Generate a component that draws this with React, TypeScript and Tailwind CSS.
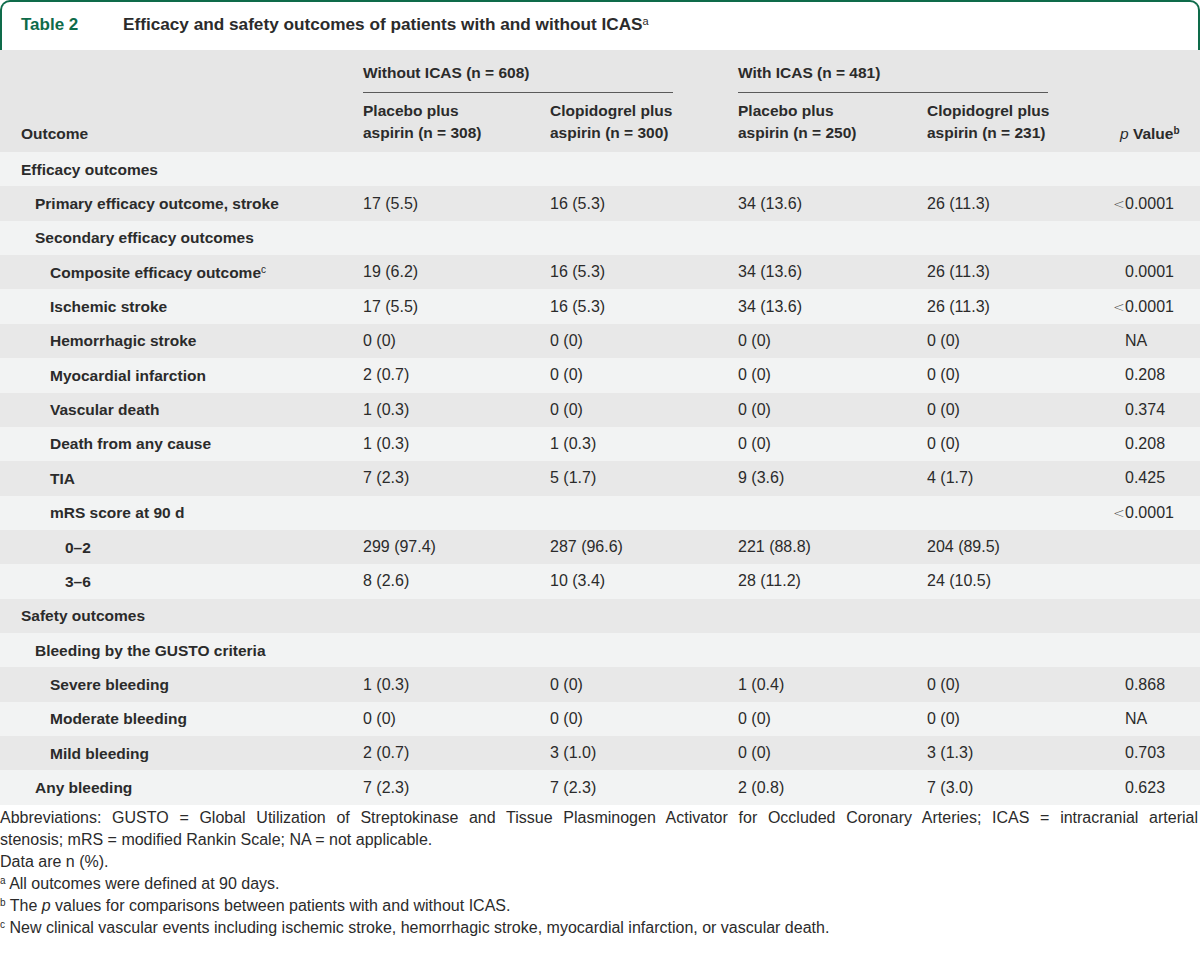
import React from 'react'

type Row = {
  label: React.ReactNode
  level: 0 | 1 | 2 | 3
  values?: string[]
  p?: string
}

const rows: Row[] = [
  { label: 'Efficacy outcomes', level: 0 },
  { label: 'Primary efficacy outcome, stroke', level: 1, values: ['17 (5.5)', '16 (5.3)', '34 (13.6)', '26 (11.3)'], p: '<0.0001' },
  { label: 'Secondary efficacy outcomes', level: 1 },
  {
    label: (
      <>
        Composite efficacy outcome<sup className="text-[10px] font-normal">c</sup>
      </>
    ),
    level: 2,
    values: ['19 (6.2)', '16 (5.3)', '34 (13.6)', '26 (11.3)'],
    p: '0.0001',
  },
  { label: 'Ischemic stroke', level: 2, values: ['17 (5.5)', '16 (5.3)', '34 (13.6)', '26 (11.3)'], p: '<0.0001' },
  { label: 'Hemorrhagic stroke', level: 2, values: ['0 (0)', '0 (0)', '0 (0)', '0 (0)'], p: 'NA' },
  { label: 'Myocardial infarction', level: 2, values: ['2 (0.7)', '0 (0)', '0 (0)', '0 (0)'], p: '0.208' },
  { label: 'Vascular death', level: 2, values: ['1 (0.3)', '0 (0)', '0 (0)', '0 (0)'], p: '0.374' },
  { label: 'Death from any cause', level: 2, values: ['1 (0.3)', '1 (0.3)', '0 (0)', '0 (0)'], p: '0.208' },
  { label: 'TIA', level: 2, values: ['7 (2.3)', '5 (1.7)', '9 (3.6)', '4 (1.7)'], p: '0.425' },
  { label: 'mRS score at 90 d', level: 2, p: '<0.0001' },
  { label: '0–2', level: 3, values: ['299 (97.4)', '287 (96.6)', '221 (88.8)', '204 (89.5)'] },
  { label: '3–6', level: 3, values: ['8 (2.6)', '10 (3.4)', '28 (11.2)', '24 (10.5)'] },
  { label: 'Safety outcomes', level: 0 },
  { label: 'Bleeding by the GUSTO criteria', level: 1 },
  { label: 'Severe bleeding', level: 2, values: ['1 (0.3)', '0 (0)', '1 (0.4)', '0 (0)'], p: '0.868' },
  { label: 'Moderate bleeding', level: 2, values: ['0 (0)', '0 (0)', '0 (0)', '0 (0)'], p: 'NA' },
  { label: 'Mild bleeding', level: 2, values: ['2 (0.7)', '3 (1.0)', '0 (0)', '3 (1.3)'], p: '0.703' },
  { label: 'Any bleeding', level: 1, values: ['7 (2.3)', '7 (2.3)', '2 (0.8)', '7 (3.0)'], p: '0.623' },
]

const indent = ['pl-[21px]', 'pl-[35px]', 'pl-[50px]', 'pl-[65px]']

const cols = 'grid grid-cols-[363px_187px_188px_189px_198px_1fr]'

function PValue({ p }: { p?: string }) {
  if (!p) return <div />
  if (p.startsWith('<')) {
    return (
      <div className="whitespace-nowrap">
        <span className="-ml-[12px] inline-block w-[12px] font-['DejaVu_Sans',sans-serif] text-[14px] font-light text-[#555]">&lt;</span>
        {p.slice(1)}
      </div>
    )
  }
  return <div>{p}</div>
}

export default function App() {
  return (
    <div className="w-[1200px] h-[956px] bg-white text-[#2b2b2b] font-['Liberation_Sans',Arial,sans-serif] overflow-hidden">
      {/* title */}
      <div className="h-[50px] border-x-2 border-t-2 border-[#0e6b4a] rounded-t-[10px] flex items-center pl-[19px] pb-[2px]">
        <span className="w-[102px] text-[17px] font-bold text-[#0e6b4a]">Table 2</span>
        <span className="text-[17.2px] font-bold text-[#2b2b2b]">
          Efficacy and safety outcomes of patients with and without ICAS
          <sup className="text-[11px] font-normal">a</sup>
        </span>
      </div>

      {/* header */}
      <div className={`${cols} h-[102px] bg-[#e6e6e6] text-[15.5px] font-bold leading-[22px]`}>
        <div className="pl-[21px] self-end pb-[7px]">Outcome</div>
        <div className="col-span-2 flex flex-col pt-[12px]">
          <div className="whitespace-nowrap">Without ICAS (n = 608)</div>
          <div className="mt-[8px] h-px w-[310px] bg-[#5a5a5a]" />
          <div className="grid grid-cols-[187px_188px] mt-[7px]">
            <div>
              Placebo plus
              <br />
              aspirin (n = 308)
            </div>
            <div>
              Clopidogrel plus
              <br />
              aspirin (n = 300)
            </div>
          </div>
        </div>
        <div className="col-span-2 flex flex-col pt-[12px]">
          <div className="whitespace-nowrap">With ICAS (n = 481)</div>
          <div className="mt-[8px] h-px w-[310px] bg-[#5a5a5a]" />
          <div className="grid grid-cols-[189px_198px] mt-[7px]">
            <div>
              Placebo plus
              <br />
              aspirin (n = 250)
            </div>
            <div>
              Clopidogrel plus
              <br />
              aspirin (n = 231)
            </div>
          </div>
        </div>
        <div className="self-end pb-[7px] -ml-[5px] whitespace-nowrap">
          <span className="italic font-normal">p</span> Value<sup className="text-[10px]">b</sup>
        </div>
      </div>

      {/* body */}
      {rows.map((r, i) => (
        <div
          key={i}
          className={`${cols} h-[34.37px] items-center text-[16px] ${i % 2 === 0 ? 'bg-[#f2f3f3]' : 'bg-[#e8e8e8]'}`}
        >
          <div className={`${indent[r.level]} text-[15.5px] font-bold whitespace-nowrap`}>{r.label}</div>
          {[0, 1, 2, 3].map((c) => (
            <div key={c} className="whitespace-nowrap">
              {r.values ? r.values[c] : ''}
            </div>
          ))}
          <PValue p={r.p} />
        </div>
      ))}

      {/* footnotes */}
      <div className="pt-[2px] text-[16px] leading-[22px] text-[#2b2b2b] whitespace-nowrap">
        <div className="text-justify [text-align-last:justify] pr-[2px]">
          Abbreviations: GUSTO = Global Utilization of Streptokinase and Tissue Plasminogen Activator for Occluded Coronary Arteries; ICAS = intracranial arterial
        </div>
        <div>stenosis; mRS = modified Rankin Scale; NA = not applicable.</div>
        <div>Data are n (%).</div>
        <div>
          <sup className="text-[10px]">a</sup> All outcomes were defined at 90 days.
        </div>
        <div>
          <sup className="text-[10px]">b</sup> The <span className="italic">p</span> values for comparisons between patients with and without ICAS.
        </div>
        <div>
          <sup className="text-[10px]">c</sup> New clinical vascular events including ischemic stroke, hemorrhagic stroke, myocardial infarction, or vascular death.
        </div>
      </div>
    </div>
  )
}
